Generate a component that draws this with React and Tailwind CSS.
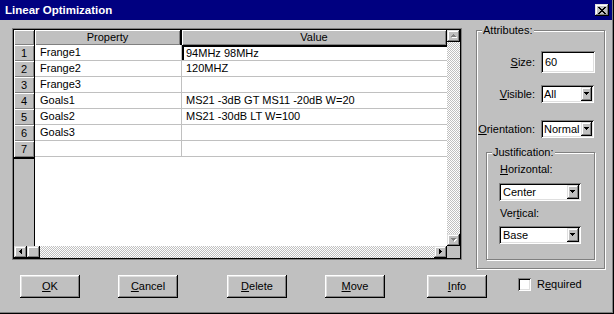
import React from "react";

const BTN =
  "shadow-[inset_-1px_-1px_0_#000,inset_1px_1px_0_#fff,inset_-2px_-2px_0_#808080,inset_2px_2px_0_#dfdfdf]";
const SMALLBTN =
  "shadow-[inset_-1px_-1px_0_#000,inset_1px_1px_0_#dfdfdf,inset_-2px_-2px_0_#808080,inset_2px_2px_0_#fff]";
const SUNKEN =
  "shadow-[inset_1px_1px_0_#808080,inset_-1px_-1px_0_#fff,inset_2px_2px_0_#000,inset_-2px_-2px_0_#dfdfdf]";
const HDR = "shadow-[inset_1px_1px_0_#fff,inset_-1px_-1px_0_#808080]";
const CHECKER =
  "bg-[image:repeating-conic-gradient(#c0c0c0_0_25%,#fff_0_50%)] bg-[length:2px_2px]";
const ETCH = "border border-[#808080] shadow-[inset_1px_1px_0_#fff,1px_1px_0_#fff]";

function Tri({ dir = "down", h = 3, disabled = false }) {
  const w = 2 * h - 1;
  const rects = [];
  for (let i = 0; i < h; i++) {
    if (dir === "down") rects.push([i, i, w - 2 * i, 1]);
    if (dir === "up") rects.push([i, h - 1 - i, w - 2 * i, 1]);
    if (dir === "right") rects.push([i, i, 1, w - 2 * i]);
    if (dir === "left") rects.push([h - 1 - i, i, 1, w - 2 * i]);
  }
  const vertical = dir === "up" || dir === "down";
  const W = vertical ? w : h;
  const H = vertical ? h : w;
  return (
    <svg width={W + 1} height={H + 1} shapeRendering="crispEdges" className="block">
      {disabled &&
        rects.map((r, k) => (
          <rect key={"s" + k} x={r[0] + 1} y={r[1] + 1} width={r[2]} height={r[3]} fill="#fff" />
        ))}
      {rects.map((r, k) => (
        <rect key={k} x={r[0]} y={r[1]} width={r[2]} height={r[3]} fill={disabled ? "#808080" : "#000"} />
      ))}
    </svg>
  );
}

function CloseGlyph() {
  const rows = [
    "XX....XX",
    ".XX..XX.",
    "..XXXX..",
    "...XX...",
    "..XXXX..",
    ".XX..XX.",
    "XX....XX",
  ];
  const rects = [];
  rows.forEach((row, y) =>
    row.split("").forEach((c, x) => {
      if (c === "X") rects.push(<rect key={x + "-" + y} x={x} y={y} width="1" height="1" fill="#000" />);
    })
  );
  return (
    <svg width="8" height="7" shapeRendering="crispEdges" className="block">
      {rects}
    </svg>
  );
}

function Select({ className, children, btn = "w-[12px]", pad = "pl-[1px]" }) {
  return (
    <div className={`${className} bg-white ${SUNKEN} p-[2px] flex`}>
      <div className={`flex-1 flex items-center ${pad} whitespace-nowrap overflow-hidden`}>{children}</div>
      <div className={`${btn} bg-[#c0c0c0] ${SMALLBTN} flex items-center justify-center`}>
        <Tri dir="down" h={3} />
      </div>
    </div>
  );
}

const rows = [
  ["Frange1", "94MHz 98MHz"],
  ["Frange2", "120MHZ"],
  ["Frange3", ""],
  ["Goals1", "MS21 -3dB GT MS11 -20dB W=20"],
  ["Goals2", "MS21 -30dB LT W=100"],
  ["Goals3", ""],
  ["", ""],
];

function Grid() {
  return (
    <div className="ml-[12px] mt-[8px] w-[450px] h-[232px] border border-[#808080]">
      <div className="h-full border border-black flex flex-col">
        <div className="flex h-[216px]">
          <div className="w-[21px] flex flex-col bg-[#c0c0c0] border-r border-black">
            <div className={`h-[15px] shrink-0 ${HDR}`}></div>
            {rows.map((_, i) => (
              <div key={i} className={`h-[16px] shrink-0 ${HDR} flex items-center justify-center`}>
                {i + 1}
              </div>
            ))}
            <div className="h-[2px] bg-black shrink-0"></div>
          </div>
          <div className="w-[412px] flex flex-col bg-white">
            <div className="h-[15px] shrink-0 flex bg-[#c0c0c0]">
              <div className={`w-[147px] border-r-2 border-black ${HDR} flex items-center justify-center`}>
                Property
              </div>
              <div className={`flex-1 border-r border-black ${HDR} flex items-center justify-center`}>
                Value
              </div>
            </div>
            {rows.map((r, i) => (
              <div key={i} className="h-[16px] shrink-0 flex border-b border-[#c0c0c0]">
                <div className="w-[147px] border-r border-[#c0c0c0] pl-[5px] flex items-center whitespace-nowrap">
                  {r[0]}
                </div>
                {i === 0 ? (
                  <div className="flex-1 border-t-2 border-l-2 border-black pl-[2px] flex items-center whitespace-nowrap">
                    {r[1]}
                  </div>
                ) : (
                  <div className="flex-1 pl-[4px] flex items-center whitespace-nowrap">{r[1]}</div>
                )}
              </div>
            ))}
          </div>
          <div className="w-[13px] flex flex-col">
            <div className={`h-[12px] shrink-0 bg-[#c0c0c0] ${SMALLBTN} flex items-center justify-center`}>
              <Tri dir="up" h={3} disabled />
            </div>
            <div className={`flex-1 ${CHECKER}`}></div>
            <div className={`h-[12px] shrink-0 bg-[#c0c0c0] ${SMALLBTN} flex items-center justify-center`}>
              <Tri dir="down" h={3} disabled />
            </div>
          </div>
        </div>
        <div className="flex h-[12px]">
          <div className={`w-[13px] bg-[#c0c0c0] ${SMALLBTN} flex items-center justify-center`}>
            <Tri dir="left" h={3} />
          </div>
          <div className={`w-[13px] bg-[#c0c0c0] ${SMALLBTN}`}></div>
          <div className={`flex-1 ${CHECKER}`}></div>
          <div className={`w-[13px] bg-[#c0c0c0] ${SMALLBTN} flex items-center justify-center`}>
            <Tri dir="right" h={3} />
          </div>
          <div className="w-[13px] bg-[#c0c0c0]"></div>
        </div>
      </div>
    </div>
  );
}

function Attributes() {
  return (
    <div className={`ml-[14px] mt-[10px] w-[129px] h-[239px] relative ${ETCH} flex flex-col pt-[20px]`}>
      <span className="absolute -top-[7px] left-[5px] px-[1px] bg-[#c0c0c0]">Attributes:</span>
      <div className="flex items-center">
        <span className="w-[58px] text-right">
          <u>S</u>ize:
        </span>
        <div className={`ml-[6px] w-[54px] h-[22px] bg-white ${SUNKEN} flex items-center pl-[4px]`}>60</div>
      </div>
      <div className="flex items-center mt-[12px]">
        <span className="w-[58px] text-right">
          <u>V</u>isible:
        </span>
        <Select className="ml-[6px] w-[53px] h-[18px]" btn="w-[11px]">
          All
        </Select>
      </div>
      <div className="flex items-center mt-[17px]">
        <span className="w-[58px] text-right whitespace-nowrap">
          <u>O</u>rientation:
        </span>
        <Select className="ml-[6px] w-[53px] h-[18px]" btn="w-[11px]">
          Normal
        </Select>
      </div>
      <div className={`mt-[14px] ml-[9px] w-[109px] h-[108px] relative ${ETCH} flex flex-col pt-[10px]`}>
        <span className="absolute -top-[7px] left-[5px] px-[1px] bg-[#c0c0c0]">Justification:</span>
        <span className="ml-[13px]">
          <u>H</u>orizontal:
        </span>
        <Select className="ml-[12px] mt-[7px] w-[82px] h-[18px]" pad="pl-[2px]">
          Center
        </Select>
        <span className="ml-[13px] mt-[6px]">
          Ver<u>t</u>ical:
        </span>
        <Select className="ml-[12px] mt-[6px] w-[82px] h-[18px]" pad="pl-[2px]">
          Base
        </Select>
      </div>
    </div>
  );
}

function Button({ className, children }) {
  return (
    <div className={`${className} w-[60px] h-[23px] bg-[#c0c0c0] ${BTN} flex items-center justify-center`}>
      {children}
    </div>
  );
}

export default function App() {
  return (
    <div className="w-[614px] h-[314px] bg-[#c0c0c0] border-r border-b border-black font-['Liberation_Sans',Arial,sans-serif] text-[11px] leading-[13px] text-black overflow-hidden">
      <div className="h-full border-r border-b border-[#808080] flex flex-col">
        <div className="h-[20px] shrink-0 bg-[#000080] flex items-center justify-between pl-[5px] pr-[3px]">
          <span className="text-white font-bold text-[11.5px]">Linear Optimization</span>
          <div className={`w-[14px] h-[12px] bg-[#c0c0c0] ${SMALLBTN} flex items-center justify-center`}>
            <CloseGlyph />
          </div>
        </div>
        <div className="flex items-start">
          <Grid />
          <Attributes />
        </div>
        <div className="flex items-center mt-[6px]">
          <Button className="ml-[20px]">
            <u>O</u>K
          </Button>
          <Button className="ml-[38px]">
            <u>C</u>ancel
          </Button>
          <Button className="ml-[49px]">
            <u>D</u>elete
          </Button>
          <Button className="ml-[38px]">
            <u>M</u>ove
          </Button>
          <Button className="ml-[42px]">
            <u>I</u>nfo
          </Button>
          <div className="ml-[31px] self-start mt-[3px] flex items-center">
            <div className={`w-[13px] h-[13px] bg-white ${SUNKEN}`}></div>
            <span className="ml-[6px]">
              R<u>e</u>quired
            </span>
          </div>
        </div>
      </div>
    </div>
  );
}
